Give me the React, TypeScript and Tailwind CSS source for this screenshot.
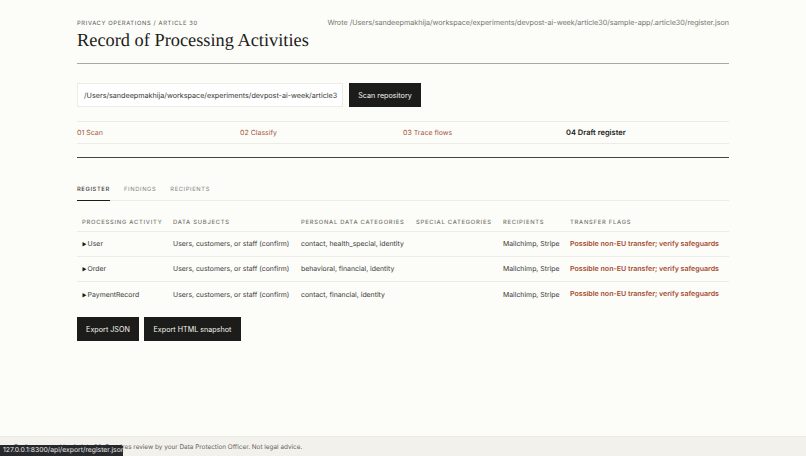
//-- Data Objects --//
const rows = [
  { name: "User", categories: "contact, health_special, identity" },
  { name: "Order", categories: "behavioral, financial, identity" },
  { name: "PaymentRecord", categories: "contact, financial, identity" },
];

const columns = [
  { label: "Processing activity", width: "w-[91px]" },
  { label: "Data subjects", width: "w-[128px]" },
  { label: "Personal data categories", width: "w-[115px]" },
  { label: "Special categories", width: "w-[87px]" },
  { label: "Recipients", width: "w-[67px]" },
  { label: "Transfer flags", width: "" },
];

//-- ***** ***** ***** Exported Component ***** ***** ***** --//
export default function App() {
  return (
    <div className="relative flex h-[456px] w-[806px] flex-col overflow-hidden bg-[#fcfcf9] font-['Inter',sans-serif] text-[#1c1c1a] antialiased [text-rendering:geometricPrecision]">
      {/*-- START OF MAIN --*/}
      <main className="flex-1 px-[77px] pt-[19px]">
        {/* Header */}
        <header className="flex h-[45px] items-start justify-between border-b border-[#a9a9a2]">
          <div className="shrink-0">
            <p className="pt-[1px] text-[5.8px] leading-[7px] tracking-[0.11em] text-[#55554f]">
              PRIVACY OPERATIONS / ARTICLE 30
            </p>
            <h1 className="mt-[1px] font-['Liberation_Serif',serif] text-[18.35px] leading-[24px] whitespace-nowrap text-[#1c1c1a]">
              Record of Processing Activities
            </h1>
          </div>
          <p className="text-[7.2px] leading-[7px] whitespace-nowrap text-[#77776f]">
            Wrote /Users/sandeepmakhija/workspace/experiments/devpost-ai-week/article30/sample-app/.article30/register.json
          </p>
        </header>

        {/* Scan form */}
        <div className="mt-[19px] flex gap-[6px]">
          <div className="flex h-[24px] w-[266px] items-center overflow-hidden border border-[#ecebe5] bg-white pt-[2px] pl-[6px] text-[7.2px] whitespace-nowrap text-[#3a3a36]">
            /Users/sandeepmakhija/workspace/experiments/devpost-ai-week/article3
          </div>
          <button className="h-[24px] w-[72px] bg-[#1c1c1a] pt-[2px] text-[7.2px] text-[#f4f4ef]">
            Scan repository
          </button>
        </div>

        {/* Steps */}
        <div className="mt-[14px] grid h-[23px] grid-cols-4 items-center border-y border-[#ecebe5] pt-[1px] text-[7px] text-[#a5553a]">
          <span>01 Scan</span>
          <span>02 Classify</span>
          <span>03 Trace flows</span>
          <span className="text-[7.5px] font-semibold text-[#1c1c1a]">04 Draft register</span>
        </div>
        <div className="mt-[13px] border-t-[1.5px] border-[#44443f]" />

        {/* Tabs */}
        <div className="mt-[28px] flex h-[15px] gap-[14px] border-b border-[#ecebe5] text-[5.75px] tracking-[0.11em] text-[#85857d]">
          <span className="h-[15px] w-[33px] border-b border-[#1c1c1a] font-medium text-[#3a3a36]">
            REGISTER
          </span>
          <span>FINDINGS</span>
          <span>RECIPIENTS</span>
        </div>

        {/* Register table */}
        <table className="mt-[9px] w-full table-fixed border-collapse text-left text-[6.9px] text-[#3a3a36]">
          <thead>
            <tr className="h-[21px] border-b border-[#ecebe5]">
              {columns.map((column) => (
                <th
                  key={column.label}
                  className={`${column.width} pt-[7px] pl-[5px] text-[5.8px] font-medium whitespace-nowrap uppercase tracking-[0.13em] text-[#77776f]`}
                >
                  {column.label}
                </th>
              ))}
            </tr>
          </thead>
          <tbody>
            {rows.map((row, index) => (
              <tr
                key={row.name}
                className={`h-[25px] ${index < rows.length - 1 ? "border-b border-[#ecebe5]" : ""}`}
              >
                <td className="pt-[2px] pl-[5px] whitespace-nowrap">
                  <span className="mr-[1px] text-[5px] text-[#1c1c1a]">▶</span>
                  {row.name}
                </td>
                <td className="pt-[2px] pl-[5px] whitespace-nowrap">Users, customers, or staff (confirm)</td>
                <td className="pt-[2px] pl-[5px] whitespace-nowrap">{row.categories}</td>
                <td className="pl-[5px]" />
                <td className="pt-[2px] pl-[5px] whitespace-nowrap">Mailchimp, Stripe</td>
                <td className="pt-[2px] pl-[5px] text-[7.05px] font-semibold whitespace-nowrap text-[#a5492c]">
                  Possible non-EU transfer; verify safeguards
                </td>
              </tr>
            ))}
          </tbody>
        </table>

        {/* Export buttons */}
        <div className="mt-[11px] flex gap-[5px] text-[7.2px] text-[#f4f4ef]">
          <button className="h-[24px] w-[62px] bg-[#1c1c1a] pt-[2px]">Export JSON</button>
          <button className="h-[24px] w-[97px] bg-[#1c1c1a] pt-[2px]">Export HTML snapshot</button>
        </div>
      </main>
      {/* END OF MAIN */}

      {/* Footer */}
      <footer className="flex h-[20px] items-center border-t border-[#ecebe5] bg-[#f3f1ec] pt-[2px] pl-[14px] text-[6.4px] text-[#66665f]">
        Draft generated by Article 30. Requires review by your Data Protection Officer. Not legal advice.
      </footer>

      {/* Browser link status */}
      <div className="absolute bottom-0 left-0 flex h-[11px] w-[123px] items-center rounded-tr-[2px] bg-[#26282c] pl-[3px] text-[6.8px] whitespace-nowrap text-[#e6e6e6]">
        127.0.0.1:8300/api/export/register.json
      </div>
    </div>
  );
}
